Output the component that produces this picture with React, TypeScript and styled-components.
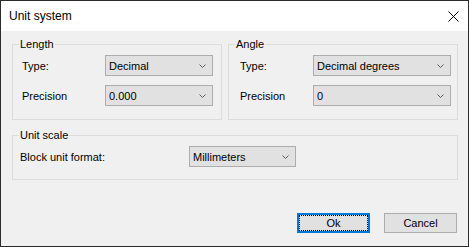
import React from 'react'
import styled, { createGlobalStyle } from 'styled-components'

const GlobalStyle = createGlobalStyle`
  html, body {
    margin: 0;
    padding: 0;
    background: #ffffff;
  }
  body {
    font-family: "Liberation Sans", Arial, sans-serif;
    font-size: 11px;
    color: #000000;
  }
  * {
    box-sizing: border-box;
  }
`

const Window = styled.div`
  width: 469px;
  height: 247px;
  display: flex;
  flex-direction: column;
  background: #f0f0f0;
  border: 1px solid #2b2b2b;
`
const TitleBar = styled.div`
  height: 30px;
  display: flex;
  align-items: center;
  justify-content: space-between;
  padding: 0 9px 0 8px;
  background: #ffffff;
  font-size: 12px;
`
const Title = styled.span`
  line-height: 16px;
`
const Body = styled.div`
  flex: 1;
  display: flex;
  flex-direction: column;
  padding: 6px 10px 0 11px;
`
const TopRow = styled.div`
  display: flex;
  gap: 6px;
`
const Group = styled.fieldset<{ $width?: number; $top?: number }>`
  margin: ${p => p.$top || 0}px 0 0 0;
  padding: 0;
  min-width: 0;
  width: ${p => (p.$width ? `${p.$width}px` : 'auto')};
  border: 1px solid #dcdcdc;
`
const Legend = styled.legend`
  margin-left: 6px;
  padding: 0 1px;
  line-height: 15px;
  font-size: 11px;
`
const Fields = styled.div<{ $label: number; $select: number; $left: number; $right: number; $bottom: number }>`
  display: grid;
  grid-template-columns: ${p => p.$label}px ${p => p.$select}px;
  row-gap: 9px;
  align-items: center;
  padding: 3px ${p => p.$right}px ${p => p.$bottom}px ${p => p.$left}px;
`
const Label = styled.span`
  line-height: 14px;
`
const Select = styled.div`
  height: 21px;
  display: flex;
  align-items: center;
  justify-content: space-between;
  padding: 0 6px 0 3px;
  background: #e1e1e1;
  border: 1px solid #adadad;
`
const Value = styled.span`
  white-space: nowrap;
`
const Footer = styled.div`
  margin-top: auto;
  display: flex;
  justify-content: flex-end;
  gap: 14px;
  padding: 0 11px 13px 0;
`
const Button = styled.button<{ $default?: boolean }>`
  width: 73px;
  height: 20px;
  padding: 0;
  font-family: "Liberation Sans", Arial, sans-serif;
  font-size: 11px;
  color: #000000;
  background: #e1e1e1;
  border: ${p => (p.$default ? '2px solid #0078d7' : '1px solid #adadad')};
  outline: ${p => (p.$default ? '1px dotted #000000' : 'none')};
  outline-offset: -3px;
`

const Chevron = () => (
  <svg width='7' height='4' viewBox='0 0 7 4'>
    <polyline points='0.5,0.5 3.5,3.5 6.5,0.5' fill='none' stroke='#5a5a5a' strokeWidth='1' />
  </svg>
)

const CloseIcon = () => (
  <svg width='11' height='11' viewBox='0 0 11 11'>
    <path d='M0.5 0.5 L10.5 10.5 M10.5 0.5 L0.5 10.5' stroke='#000000' strokeWidth='1' />
  </svg>
)

const Combo: React.FC<{ value: string }> = ({ value }) => (
  <Select>
    <Value>{value}</Value>
    <Chevron />
  </Select>
)

const App: React.FC = () => (
  <>
    <GlobalStyle />
    <Window>
      <TitleBar>
        <Title>Unit system</Title>
        <CloseIcon />
      </TitleBar>
      <Body>
        <TopRow>
          <Group $width={210}>
            <Legend>Length</Legend>
            <Fields $label={83} $select={108} $left={9} $right={8} $bottom={13}>
              <Label>Type:</Label>
              <Combo value='Decimal' />
              <Label>Precision</Label>
              <Combo value='0.000' />
            </Fields>
          </Group>
          <Group $width={230}>
            <Legend>Angle</Legend>
            <Fields $label={73} $select={138} $left={11} $right={6} $bottom={13}>
              <Label>Type:</Label>
              <Combo value='Decimal degrees' />
              <Label>Precision</Label>
              <Combo value='0' />
            </Fields>
          </Group>
        </TopRow>
        <Group $top={8}>
          <Legend>Unit scale</Legend>
          <Fields $label={169} $select={107} $left={7} $right={0} $bottom={12}>
            <Label>Block unit format:</Label>
            <Combo value='Millimeters' />
          </Fields>
        </Group>
      </Body>
      <Footer>
        <Button type='button' $default>Ok</Button>
        <Button type='button'>Cancel</Button>
      </Footer>
    </Window>
  </>
)

export default App
